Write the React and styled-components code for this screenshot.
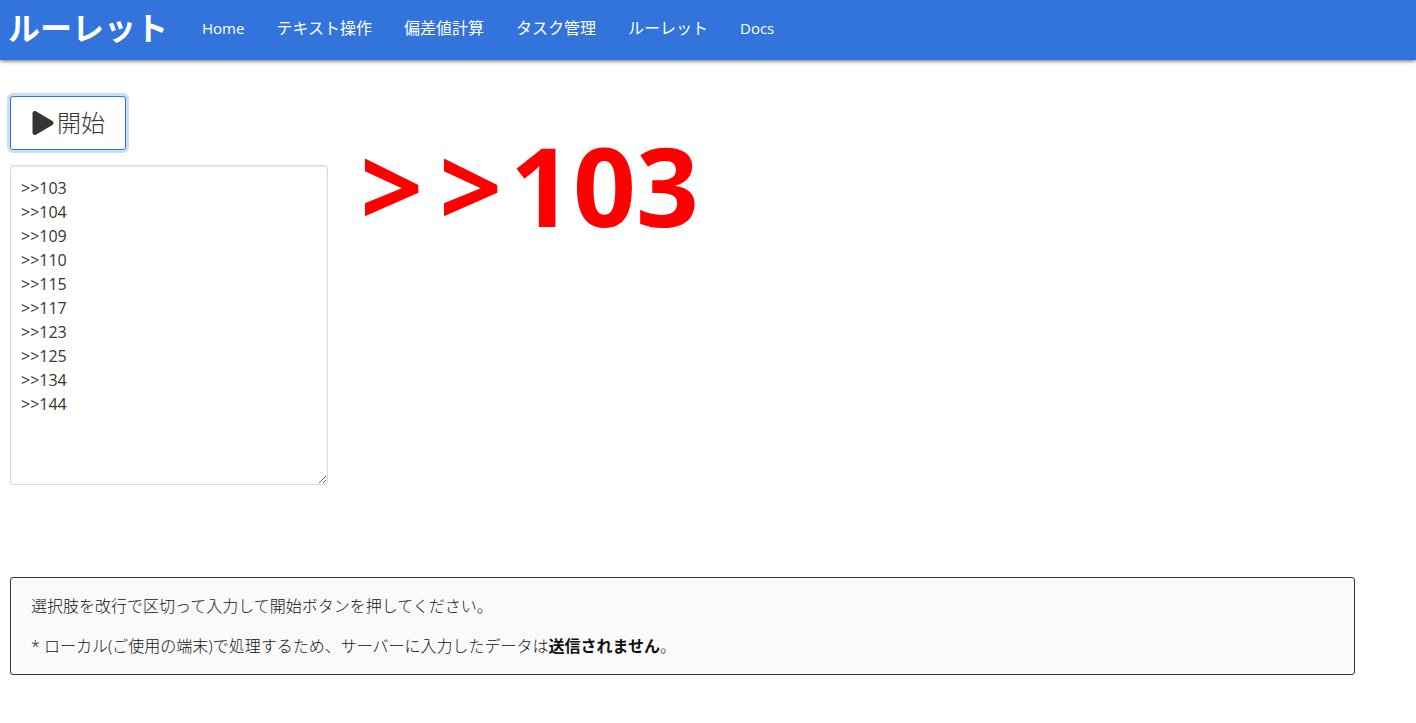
import React, { useState } from 'react';
import styled, { createGlobalStyle } from 'styled-components';
import { FaPlay } from 'react-icons/fa';

const primary = '#3273dc';
const text = '#363636';

const GlobalStyle = createGlobalStyle`
    *, *::before, *::after {
        box-sizing: border-box;
    }
    body {
        margin: 0;
        background: #fff;
        color: ${text};
        font-family: "Open Sans", "Noto Sans CJK JP", sans-serif;
        font-size: 16px;
        line-height: 24px;
    }
    button, textarea {
        font-family: inherit;
    }
`;

const Header = styled.header`
    display: flex;
    align-items: center;
    height: 60px;
    padding: 0 8px 4px;
    background: ${primary};
    color: #fff;
    box-shadow: 0 1px 4px rgba(0, 0, 0, 0.6);
`;

const Title = styled.h1`
    margin: 0;
    font-size: 32px;
    font-weight: 700;
    line-height: 56px;
    white-space: nowrap;
`;

const Nav = styled.nav`
    display: flex;
    align-items: center;
    margin-left: 18px;
`;

const NavLink = styled.a`
    padding: 0 16px;
    color: #fff;
    font-size: ${({ $latin }) => ($latin ? '15px' : '16px')};
    line-height: 24px;
    text-decoration: none;
    white-space: nowrap;
`;

const Main = styled.main`
    width: 95%;
    margin: 36px 0 0 10px;
`;

const Columns = styled.div`
    display: grid;
    grid-template-columns: repeat(4, 1fr);
    gap: 24px;
`;

const Controls = styled.div`
    display: flex;
    flex-direction: column;
    align-items: flex-start;
    gap: 15px;
`;

const StartButton = styled.button`
    display: inline-flex;
    align-items: center;
    gap: 2px;
    height: 54px;
    padding: 0 20px;
    border: 1px solid ${primary};
    border-radius: 3px;
    background: #fff;
    color: ${text};
    font-size: 24px;
    font-weight: 300;
    line-height: 36px;
    outline: none;
    box-shadow: 0 0 0 3px rgba(50, 115, 220, 0.25);
    cursor: pointer;
`;

const Choices = styled.textarea`
    display: block;
    width: 100%;
    height: 320px;
    padding: 10px;
    border: 1px solid #dbdbdb;
    border-radius: 3px;
    background: #fff;
    color: ${text};
    font-size: 16px;
    line-height: 24px;
    box-shadow: inset 0 1px 2px rgba(10, 10, 10, 0.1);
    resize: vertical;
`;

const Result = styled.output`
    grid-column: span 3;
    padding-top: 8px;
    color: #f00;
    font-size: 110px;
    font-weight: 700;
    line-height: 160px;
`;

const Mark = styled.span`
    padding: 0 8px;
`;

const Notice = styled.section`
    display: flex;
    flex-direction: column;
    gap: 16px;
    margin-top: 92px;
    padding: 16px 20px;
    border: 1px solid ${text};
    border-radius: 3px;
    background: #fafafa;
    color: #111;
`;

const Paragraph = styled.p`
    margin: 0;
    font-weight: 300;

    strong {
        font-weight: 700;
    }
`;

const links = [
    { label: 'Home', href: '#home', latin: true },
    { label: 'テキスト操作', href: '#text' },
    { label: '偏差値計算', href: '#deviation' },
    { label: 'タスク管理', href: '#task' },
    { label: 'ルーレット', href: '#roulette' },
    { label: 'Docs', href: '#docs', latin: true }
];

const initialChoices = [103, 104, 109, 110, 115, 117, 123, 125, 134, 144]
    .map(n => `>>${n}`)
    .join('\n');

const App = () => {
    const [choices, setChoices] = useState(initialChoices);
    const [result, setResult] = useState('>>103');

    const start = () => {
        const lines = choices.split('\n').filter(Boolean);
        setResult(lines[Math.floor(Math.random() * lines.length)] || '');
    };

    return (
        <>
            <GlobalStyle/>

            <Header>
                <Title>ルーレット</Title>
                <Nav>
                    {links.map(({ label, href, latin }) => (
                        <NavLink key={href} href={href} $latin={latin}>{label}</NavLink>
                    ))}
                </Nav>
            </Header>

            <Main>
                <Columns>
                    <Controls>
                        <StartButton type="button" onClick={start}>
                            <FaPlay aria-hidden="true"/>
                            <span>開始</span>
                        </StartButton>
                        <Choices
                            aria-label="選択肢"
                            spellCheck={false}
                            value={choices}
                            onChange={e => setChoices(e.target.value)}
                        />
                    </Controls>

                    <Result>
                        {result.split('').map((char, i) => (
                            char === '>' ? <Mark key={i}>{char}</Mark> : char
                        ))}
                    </Result>
                </Columns>

                <Notice>
                    <Paragraph>選択肢を改行で区切って入力して開始ボタンを押してください。</Paragraph>
                    <Paragraph>
                        * ローカル(ご使用の端末)で処理するため、サーバーに入力したデータは<strong>送信されません</strong>。
                    </Paragraph>
                </Notice>
            </Main>
        </>
    );
};

export default App;
